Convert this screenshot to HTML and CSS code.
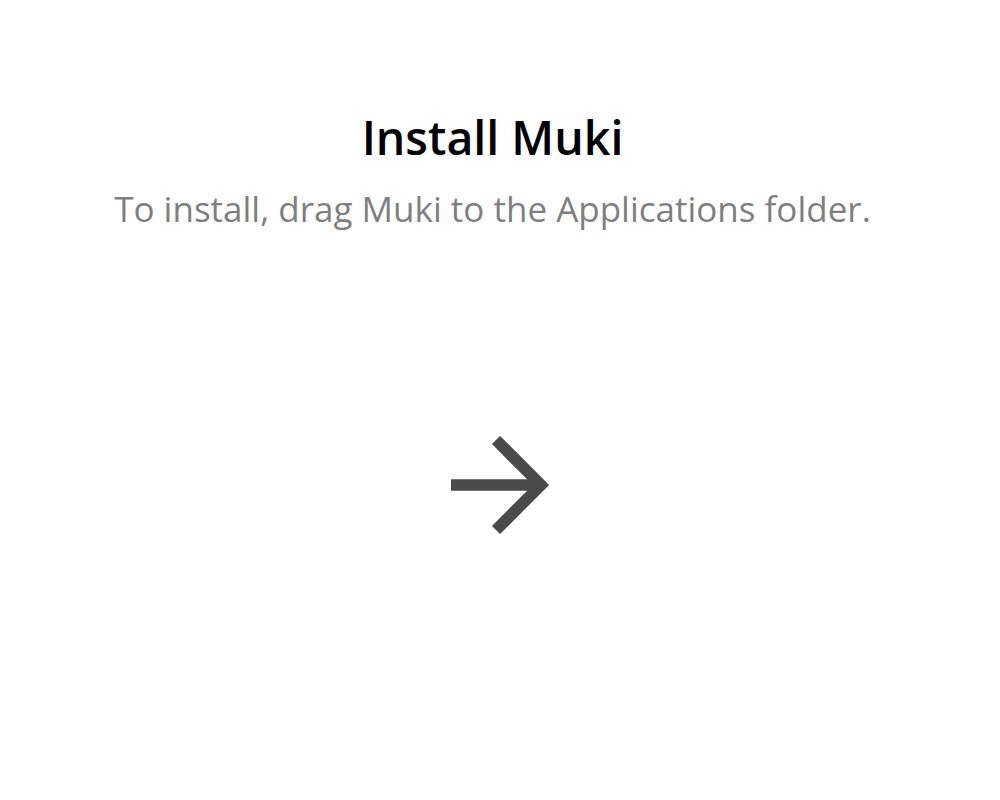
FILE: index.html
```html
<!DOCTYPE html>
<html>
<head>
<meta charset="utf-8">
<link rel="stylesheet" href="styles.css">
</head>
<body>
<main class="installer">
  <header class="heading">
    <h1 class="title">Install Muki</h1>
    <p class="subtitle">To install, drag Muki to the Applications folder.</p>
  </header>
  <div class="drop-area">
    <svg class="arrow" width="100" height="100" viewBox="0 0 100 100">
      <line x1="1" y1="50" x2="88" y2="50" stroke="#4a4a4a" stroke-width="11.5"/>
      <polyline points="46,5 91,50 46,95" fill="none" stroke="#4a4a4a" stroke-width="11.5" stroke-linejoin="miter"/>
    </svg>
  </div>
</main>
</body>
</html>
```
FILE: styles.css
```css
html, body {
  margin: 0;
  padding: 0;
  background: #ffffff;
}
.installer {
  width: 1000px;
  height: 800px;
  display: flex;
  flex-direction: column;
  align-items: center;
  font-family: "Open Sans", "Noto Sans CJK KR", sans-serif;
}
.heading {
  align-self: stretch;
  display: flex;
  flex-direction: column;
  align-items: center;
  padding-right: 15px;
}
.title {
  margin: 105px 0 0;
  font-size: 46.5px;
  font-weight: 600;
  line-height: 64px;
  color: #000;
}
.subtitle {
  margin: 16px 0 0;
  font-size: 35px;
  line-height: 48px;
  color: #7f7f7f;
  font-weight: 500;
}
.drop-area {
  margin-top: 202px;
  display: flex;
  justify-content: center;
}
.arrow {
  display: block;
}
```
